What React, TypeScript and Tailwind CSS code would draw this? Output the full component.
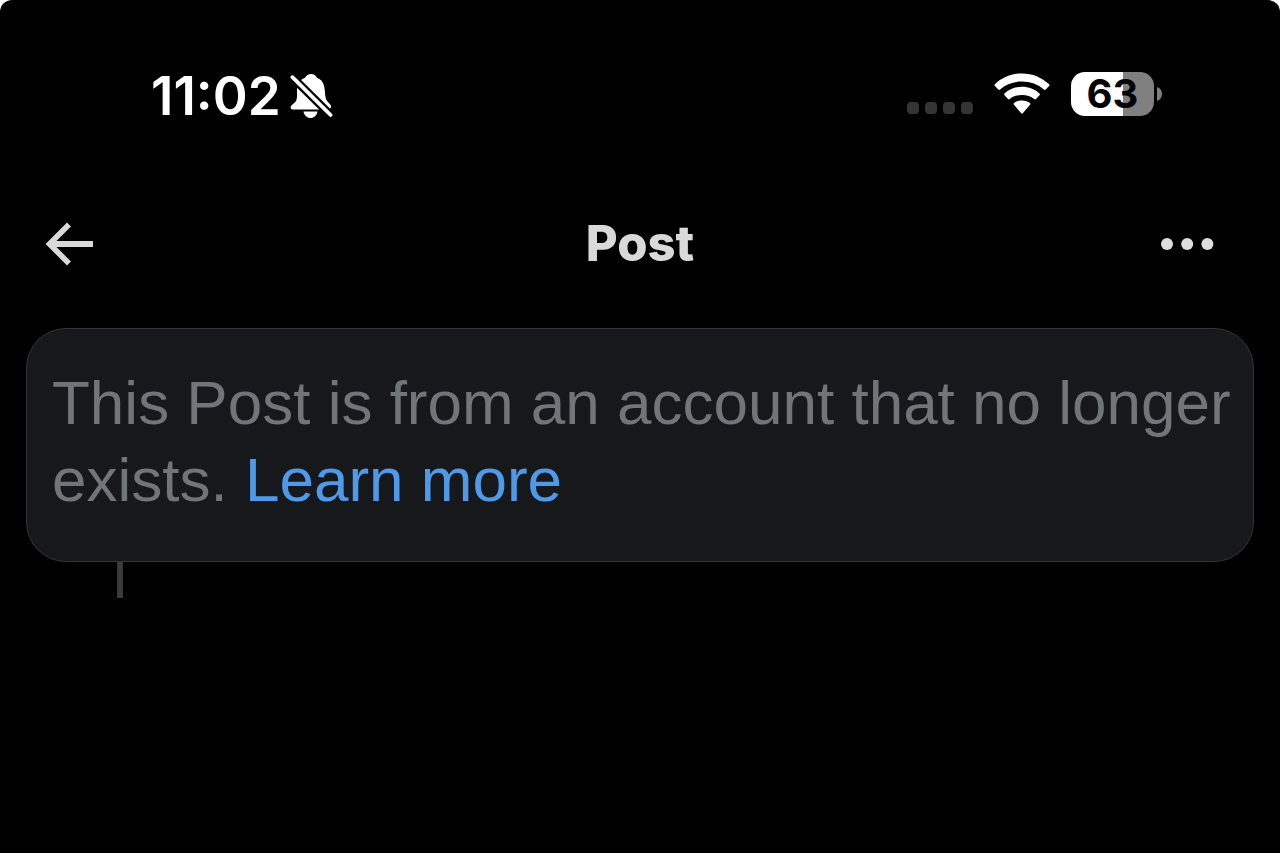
import type { ReactNode } from 'react'

function BellOffIcon() {
  return (
    <svg width="44" height="46" viewBox="0 0 44 46" aria-label="Silent mode" role="img">
      <path
        d="M7 28 C5.5 30.4 1.6 32 1.6 34.7 Q1.6 36.5 3.6 36.5 H38 Q42 36.5 42 33.5 C42 31 38.5 29.5 37 26 C35.6 22.5 36.4 17.5 35 12.5 C33.8 8.5 31.5 6 28 4.8 C26.8 2.4 24.8 1 22 1 C19.2 1 17.2 2.4 16 4.8 C12 6.2 9.3 9.3 8.3 14 C7.3 19 9 24 7 28 Z"
        fill="white"
      />
      <path d="M14.5 38.5 H28.5 C27.8 42.6 25 45 21.5 45 C18 45 15.2 42.6 14.5 38.5 Z" fill="white" />
      <path d="M2.6 3.4 L43 43.4" stroke="black" strokeWidth="8.4" />
      <path d="M3.4 4.2 L41.6 42" stroke="white" strokeWidth="3.8" strokeLinecap="round" />
    </svg>
  )
}

function WifiIcon() {
  return (
    <svg width="56" height="42" viewBox="0 0 56 42" fill="white" aria-label="Wi-Fi" role="img">
      <path d="M28 0.4 C17.6 0.4 8 4.4 0.9 11.2 Q0 12.1 0.9 13.1 L4.3 16.6 Q5.2 17.4 6.1 16.6 C11.9 11.3 19.5 8.6 28 8.6 C36.5 8.6 44.1 11.3 49.9 16.6 Q50.8 17.4 51.7 16.6 L55.1 13.1 Q56 12.1 55.1 11.2 C48 4.4 38.4 0.4 28 0.4 Z" />
      <path d="M28 13.8 C21.3 13.8 15.2 16.3 10.5 20.4 Q9.6 21.3 10.5 22.2 L14 25.9 Q14.8 26.8 15.8 26 C19 23.3 23.3 22 28 22 C32.7 22 37 23.3 40.2 26 Q41.2 26.8 42 25.9 L45.5 22.2 Q46.4 21.3 45.5 20.4 C40.8 16.3 34.7 13.8 28 13.8 Z" />
      <path d="M28 27.4 C24.9 27.4 22.1 28.3 20 30.1 Q19.2 30.9 20 31.8 L27 40 Q28 41 29 40 L36 31.8 Q36.8 30.9 36 30.1 C33.9 28.3 31.1 27.4 28 27.4 Z" />
    </svg>
  )
}

function Battery({ level }: { level: number }) {
  return (
    <div className="flex items-center gap-[3px]" aria-label={`Battery ${level}%`}>
      <div
        className="h-11 w-[83px] rounded-[14px] text-center text-[40px] leading-[44px] font-bold text-black"
        style={{ background: `linear-gradient(to right, #fff ${level}%, #808080 ${level}%)` }}
      >
        {level}
      </div>
      <svg width="5" height="14" viewBox="0 0 5 14">
        <path d="M0 0 C3 1 5 3.6 5 7 C5 10.4 3 13 0 14 Z" fill="#808080" />
      </svg>
    </div>
  )
}

function StatusBar() {
  return (
    <div className="flex h-12 items-center justify-between pr-[118px] pl-[151px]">
      <div className="flex items-center gap-2">
        <time className="text-[53px] leading-[48px] font-semibold text-white">11:02</time>
        <BellOffIcon />
      </div>
      <div className="flex items-center gap-[21px] pb-1">
        <div className="flex gap-[6px] self-end pb-[2px]" aria-label="No signal">
          {[0, 1, 2, 3].map((i) => (
            <span key={i} className="size-3 rounded-[4px] bg-[#343434]" />
          ))}
        </div>
        <WifiIcon />
        <Battery level={63} />
      </div>
    </div>
  )
}

function NavBar() {
  return (
    <header className="grid grid-cols-3 items-center px-11">
      <button type="button" aria-label="Back" className="justify-self-start">
        <svg width="50" height="46" viewBox="0 0 50 46" fill="none" stroke="#d9d9d9">
          <path d="M25 3.5 L5.5 23 L25 42.5" strokeWidth="5.6" />
          <path d="M6 23 H49" strokeWidth="6" />
        </svg>
      </button>
      <h1 className="text-center text-[49px] leading-[60px] font-extrabold text-[#d9d9d9]">Post</h1>
      <button type="button" aria-label="More options" className="mr-5 justify-self-end">
        <svg width="56" height="14" viewBox="0 0 56 14" fill="#dedede">
          <circle cx="7" cy="7" r="6" />
          <circle cx="27.2" cy="7" r="6" />
          <circle cx="47.4" cy="7" r="6" />
        </svg>
      </button>
    </header>
  )
}

function Notice({ children }: { children: ReactNode }) {
  return (
    <div className="rounded-[40px] border border-[#343537] bg-[#17181c] pt-[35px] pr-4 pb-[43px] pl-[25px]">
      <p className="font-['Liberation_Sans',Arial,sans-serif] text-[62px] leading-[77px] text-[#717478]">
        {children}
      </p>
    </div>
  )
}

export default function App() {
  return (
    <div className="bg-white">
      <div className="min-h-screen rounded-t-xl bg-black pt-[72px] font-['Inter',sans-serif]">
        <StatusBar />
        <div className="pt-[94px]">
          <NavBar />
        </div>
        <main className="px-[26px] pt-[54px]">
          <Notice>
            This Post is from an account that no longer exists.{' '}
            <a href="#" className="text-[#4f9ae8]">
              Learn more
            </a>
          </Notice>
          <div className="ml-[91px] h-9 w-[6px] bg-[#3a3a3a]" />
        </main>
      </div>
    </div>
  )
}
